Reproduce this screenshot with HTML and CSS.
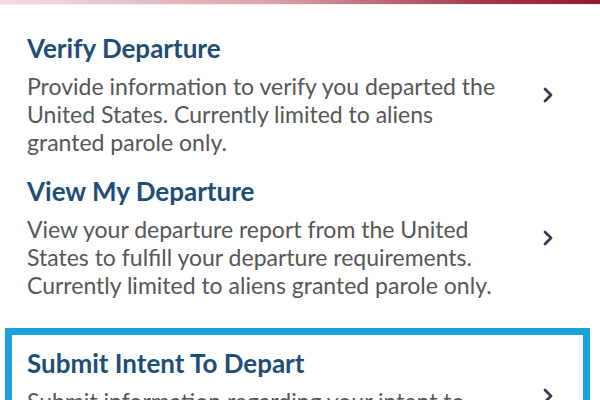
FILE: index.html
```html
<!DOCTYPE html>
<html lang="en">
<head>
<meta charset="utf-8">
<title>Departure</title>
<link rel="stylesheet" href="styles.css">
</head>
<body>
<div class="topbar"></div>
<div class="list">
  <div class="item item-first">
    <div class="content">
      <div class="title">Verify Departure</div>
      <div class="desc">Provide information to verify you departed the United States. Currently limited to aliens granted parole only.</div>
    </div>
    <svg class="chev" width="10" height="16" viewBox="0 0 10 16"><path d="M2 2 L8 8 L2 14" fill="none" stroke="#2d3e52" stroke-width="2.8" stroke-linecap="round" stroke-linejoin="round"/></svg>
  </div>
  <div class="item item-second">
    <div class="content">
      <div class="title">View My Departure</div>
      <div class="desc">View your departure report from the United States to fulfill your departure requirements. Currently limited to aliens granted parole only.</div>
    </div>
    <svg class="chev" width="10" height="16" viewBox="0 0 10 16"><path d="M2 2 L8 8 L2 14" fill="none" stroke="#2d3e52" stroke-width="2.8" stroke-linecap="round" stroke-linejoin="round"/></svg>
  </div>
  <div class="item item-focus">
    <div class="content">
      <div class="title">Submit Intent To Depart</div>
      <div class="desc">Submit information regarding your intent to depart the United States.</div>
    </div>
    <svg class="chev" width="10" height="16" viewBox="0 0 10 16"><path d="M2 2 L8 8 L2 14" fill="none" stroke="#2d3e52" stroke-width="2.8" stroke-linecap="round" stroke-linejoin="round"/></svg>
  </div>
</div>
</body>
</html>
```
FILE: styles.css
```css
html, body {
  margin: 0;
  padding: 0;
  background: #ffffff;
  font-family: Lato, "Open Sans", "Liberation Sans", sans-serif;
  overflow: hidden;
}
.topbar {
  height: 4px;
  background: linear-gradient(to right, #f4dde2 0%, #d9a3ae 45%, #a2394a 80%, #8e1a2c 100%);
  border-bottom: 1px solid #fbeef1;
}
.list {
  display: flex;
  flex-direction: column;
}
.item {
  display: flex;
  align-items: center;
  padding: 0 47px 0 27px;
}
.item-first {
  padding-top: 28px;
}
.item-second {
  margin-top: 20px;
}
.item-focus {
  margin: 29px 10px 0 5px;
  border: 7px solid #1ba1dc;
  padding: 13px 30px 0 15px;
}
.content {
  flex: 1;
  padding-right: 43px;
}
.title {
  font-size: 26px;
  line-height: 30px;
  font-weight: 700;
  color: #1e4e76;
}
.desc {
  margin-top: 9px;
  font-size: 23px;
  line-height: 28px;
  color: #565656;
}
.chev {
  flex: none;
  display: block;
}
```
